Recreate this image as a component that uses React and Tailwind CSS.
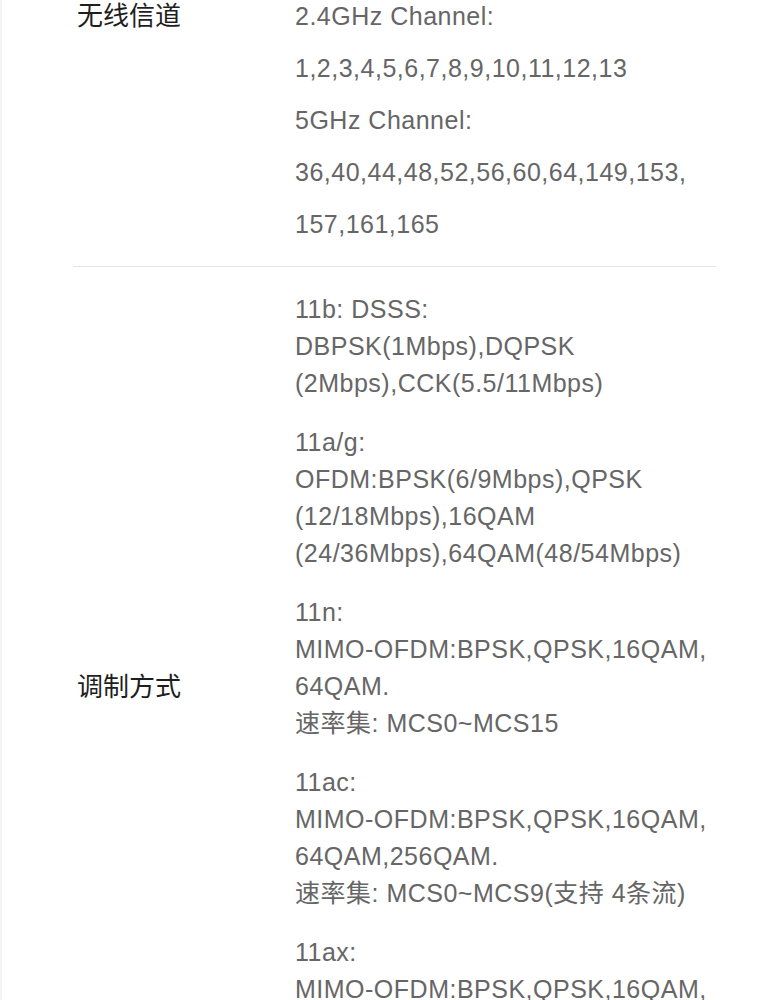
export default function App() {
  const channels = [
    "2.4GHz Channel:",
    "1,2,3,4,5,6,7,8,9,10,11,12,13",
    "5GHz Channel:",
    "36,40,44,48,52,56,60,64,149,153,",
    "157,161,165",
  ];

  const modes = [
    ["11b: DSSS:", "DBPSK(1Mbps),DQPSK", "(2Mbps),CCK(5.5/11Mbps)"],
    [
      "11a/g:",
      "OFDM:BPSK(6/9Mbps),QPSK",
      "(12/18Mbps),16QAM",
      "(24/36Mbps),64QAM(48/54Mbps)",
    ],
    [
      "11n:",
      "MIMO-OFDM:BPSK,QPSK,16QAM,",
      "64QAM.",
      "速率集: MCS0~MCS15",
    ],
    [
      "11ac:",
      "MIMO-OFDM:BPSK,QPSK,16QAM,",
      "64QAM,256QAM.",
      "速率集: MCS0~MCS9(支持 4条流)",
    ],
    [
      "11ax:",
      "MIMO-OFDM:BPSK,QPSK,16QAM,",
      "64QAM,256QAM,1024QAM.",
      "速率集: MCS0~MCS11(支持 4条流)",
    ],
  ];

  return (
    <div className="min-h-screen overflow-hidden bg-white border-l-2 border-[#f3f3f3] font-['Liberation_Sans','Noto_Sans_CJK_SC',sans-serif]">
      <div className="pl-[71px] pr-[67px]">
        {/* 无线信道 */}
        <div className="-mt-[10px] flex border-b border-[#e4e4e4] pb-4">
          <div className="w-[222px] shrink-0 pl-[4px] text-[26px] leading-[52px] text-[#1e1e1e]">
            无线信道
          </div>
          <div className="text-[25px] leading-[52px] tracking-[0.5px] text-[#666]">
            {channels.map((line) => (
              <div key={line} className="whitespace-nowrap">
                {line}
              </div>
            ))}
          </div>
        </div>

        {/* 调制方式 */}
        <div className="flex items-center pt-6 pb-[30px]">
          <div className="w-[222px] shrink-0 pl-[4px] text-[26px] leading-[52px] text-[#1e1e1e]">
            调制方式
          </div>
          <div className="flex flex-col gap-[22px] text-[25px] leading-[37px] tracking-[0.5px] text-[#666]">
            {modes.map((block, i) => (
              <div key={i}>
                {block.map((line) => (
                  <div key={line} className="whitespace-nowrap">
                    {line}
                  </div>
                ))}
              </div>
            ))}
          </div>
        </div>
      </div>
    </div>
  );
}
